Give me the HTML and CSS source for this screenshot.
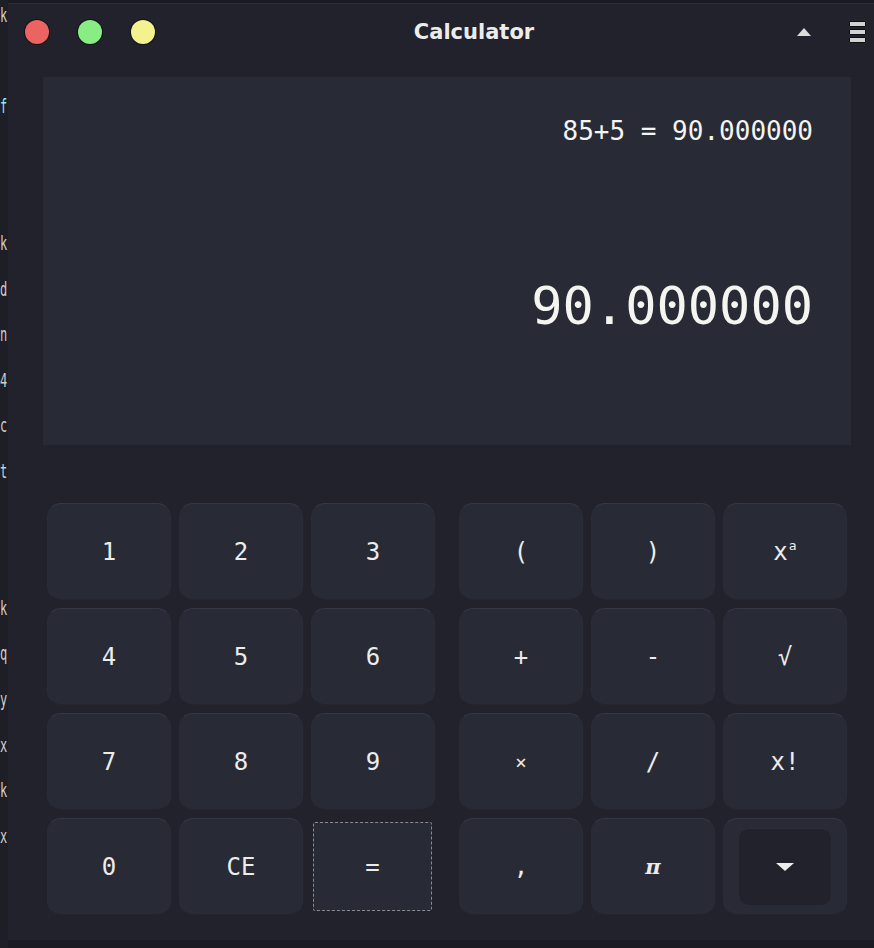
FILE: index.html
```html
<!DOCTYPE html>
<html lang="en">
<head>
<meta charset="utf-8">
<title>Calculator</title>
<link rel="stylesheet" href="styles.css">
</head>
<body>
<div class="screen">
  <div class="strip">
    <span class="g">k</span><span class="g"></span><span class="g cyan">f</span><span class="g"></span><span class="g"></span>
    <span class="g">k</span><span class="g">d</span><span class="g">n</span><span class="g">4</span><span class="g">c</span><span class="g">t</span>
    <span class="g"></span><span class="g"></span>
    <span class="g">k</span><span class="g">q</span><span class="g">y</span><span class="g">x</span><span class="g">k</span><span class="g">x</span>
  </div>
  <div class="window">
    <header class="titlebar">
      <div class="lights">
        <span class="light red"></span>
        <span class="light green"></span>
        <span class="light yellow"></span>
      </div>
      <div class="title">Calculator</div>
      <div class="tools">
        <span class="up"></span>
        <span class="menu"><i></i><i></i><i></i></span>
      </div>
    </header>

    <section class="display">
      <div class="expr">85+5 = 90.000000</div>
      <div class="result">90.000000</div>
    </section>

    <section class="keypad">
      <div class="group">
        <button class="key">1</button>
        <button class="key">2</button>
        <button class="key">3</button>
        <button class="key">4</button>
        <button class="key">5</button>
        <button class="key">6</button>
        <button class="key">7</button>
        <button class="key">8</button>
        <button class="key">9</button>
        <button class="key">0</button>
        <button class="key">CE</button>
        <button class="key focus">=</button>
      </div>
      <div class="group">
        <button class="key">(</button>
        <button class="key">)</button>
        <button class="key">x<span class="sup">a</span></button>
        <button class="key">+</button>
        <button class="key">-</button>
        <button class="key">√</button>
        <button class="key small">×</button>
        <button class="key">/</button>
        <button class="key">x!</button>
        <button class="key">,</button>
        <button class="key pi">π</button>
        <button class="key dd"><span class="dd-inner"><span class="down"></span></span></button>
      </div>
    </section>
  </div>
</div>
</body>
</html>
```

FILE: styles.css
```css
html, body {
  margin: 0;
  padding: 0;
  background: #1a1b22;
}

.screen {
  display: flex;
  width: 874px;
  height: 948px;
  overflow: hidden;
  background: #1a1b22;
}

.strip {
  width: 8px;
  flex: none;
  display: flex;
  flex-direction: column;
  margin-top: -6px;
  background: #1d1e26;
  font-family: "DejaVu Sans Mono", monospace;
  font-size: 12px;
  line-height: 45.6px;
  color: #cfcfcf;
}

.strip .g {
  display: block;
  height: 45.6px;
  width: 8px;
  white-space: nowrap;
  transform: scaleY(1.6);
}

.strip .cyan { color: #8be9fd; }

.window {
  flex: 1;
  margin-top: 3px;
  height: 936px;
  border-top: 1px solid #2d2e39;
  background: #21222c;
  display: flex;
  flex-direction: column;
}

.titlebar {
  height: 56px;
  display: flex;
  align-items: center;
  padding: 0 8px 0 17px;
  flex: none;
}

.lights {
  display: flex;
  gap: 29px;
}

.light {
  width: 24px;
  height: 24px;
  border-radius: 50%;
  box-shadow: 0 0 0 1px #111218;
}

.red { background: #ec6461; }
.green { background: #88ee84; }
.yellow { background: #f3f28f; }

.title {
  flex: 1;
  text-align: center;
  font-family: "DejaVu Sans", sans-serif;
  font-weight: 700;
  font-size: 21px;
  color: #ececec;
  padding-right: 4px;
}

.tools {
  display: flex;
  align-items: center;
  gap: 38px;
}

.up {
  width: 0;
  height: 0;
  border-left: 7px solid transparent;
  border-right: 7px solid transparent;
  border-bottom: 8px solid #dcdcdc;
}

.menu {
  display: flex;
  flex-direction: column;
  gap: 2px;
}

.menu i {
  display: block;
  width: 15px;
  height: 4px;
  background: #d2d2d2;
  border: 1px solid #0d0e12;
  border-radius: 1px;
}

.display {
  flex: none;
  margin: 17px 23px 0 35px;
  height: 368px;
  background: #282a36;
  padding: 39px 38px 0 0;
  box-sizing: border-box;
  display: flex;
  flex-direction: column;
  align-items: flex-end;
  font-family: "DejaVu Sans Mono", monospace;
  color: #f4f4f0;
}

.expr {
  font-size: 26px;
  line-height: 30px;
  height: 30px;
}

.result {
  margin-top: 130px;
  font-size: 52px;
  line-height: 60px;
}

.keypad {
  margin: 58px 0 0 39px;
  display: flex;
  gap: 24px;
}

.group {
  display: grid;
  grid-template-columns: repeat(3, 124px);
  grid-auto-rows: 97px;
  gap: 8px;
}

.key {
  margin: 0;
  padding: 0;
  border: 1px solid #2a2c38;
  border-top-color: #353746;
  border-bottom-color: #24252f;
  border-radius: 14px;
  background: #282a36;
  color: #ececea;
  font-family: "DejaVu Sans Mono", monospace;
  font-size: 24px;
  display: flex;
  align-items: center;
  justify-content: center;
}

.key .sup {
  font-size: 13px;
  align-self: flex-start;
  margin-top: 34px;
  margin-left: 1px;
}

.key.small { font-size: 19px; }

.key.pi {
  font-family: "DejaVu Serif", serif;
  font-style: italic;
  font-weight: 700;
  font-size: 21px;
}

.key.focus {
  margin: 4px 3px 4px 2px;
  border: 1px dashed #8a8a8e;
  border-radius: 2px;
}

.dd-inner {
  width: 92px;
  height: 76px;
  border-radius: 10px;
  background: #21222c;
  border-top: 1px solid #2d2e3a;
  display: flex;
  align-items: center;
  justify-content: center;
}

.down {
  width: 0;
  height: 0;
  border-left: 9px solid transparent;
  border-right: 9px solid transparent;
  border-top: 8px solid #ececec;
}
```
